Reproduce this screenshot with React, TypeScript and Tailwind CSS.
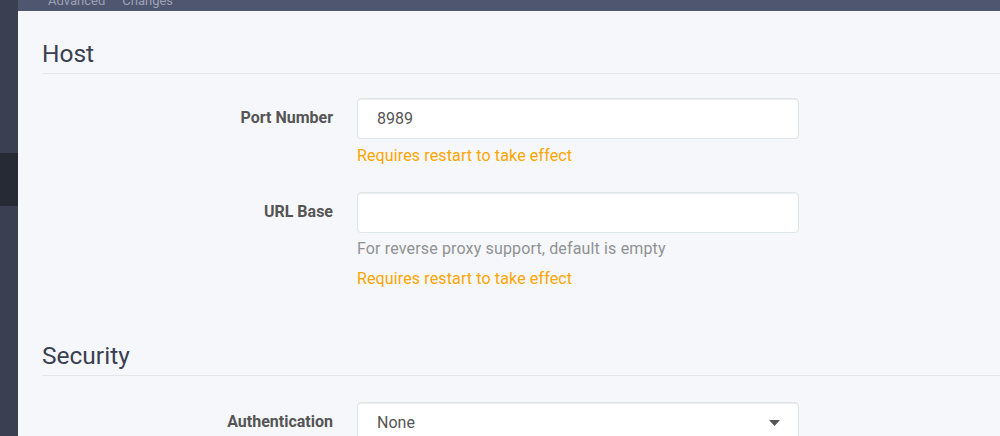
import React from 'react';

const font = { fontFamily: 'Roboto, "Open Sans", "Liberation Sans", sans-serif' };

function Legend({ title }: { title: string }) {
  return (
    <div className="border-b border-[#e5e5e5] pb-[3px] text-[24.5px] leading-[32px] text-[#3a3f51]">
      {title}
    </div>
  );
}

function Row({
  label,
  children,
  help,
  restart,
}: {
  label: string;
  children: React.ReactNode;
  help?: string;
  restart?: boolean;
}) {
  return (
    <div className="flex">
      <div className="w-[291px] shrink-0 pt-[9px] text-right text-[16px] font-bold leading-[22px] text-[#555]">
        {label}
      </div>
      <div className="w-[466px] shrink-0 pl-[24px]">
        {children}
        {help && (
          <div className="mt-[5px] text-[16px] leading-[22px] tracking-[0.15px] text-[#909293]">{help}</div>
        )}
        {restart && (
          <div
            className={
              help
                ? 'mt-[8px] text-[16px] leading-[22px] tracking-[0.13px] text-[#ffa500]'
                : 'mt-[6px] text-[16px] leading-[22px] tracking-[0.13px] text-[#ffa500]'
            }
          >
            Requires restart to take effect
          </div>
        )}
      </div>
    </div>
  );
}

function TextInput({ value }: { value: string }) {
  return (
    <div className="flex h-[41px] items-center rounded-[4px] border border-[#dde6e9] bg-white px-[19px] text-[16px] text-[#555] shadow-[inset_0_1px_1px_rgba(0,0,0,0.075)]">
      {value}
    </div>
  );
}

export default function App() {
  return (
    <div className="flex h-[436px] w-[1000px] overflow-hidden bg-[#f5f7fa]" style={font}>
      {/* sidebar */}
      <div className="flex w-[18px] shrink-0 flex-col bg-[#3a3f51]">
        <div className="h-[153px]" />
        <div className="h-[53px] bg-[#262a35]" />
      </div>

      <div className="flex min-w-0 flex-1 flex-col">
        {/* toolbar, scrolled mostly out of view */}
        <div className="h-[11px] shrink-0 overflow-hidden bg-[#4f566f]">
          <div className="mt-[-6px] flex gap-[17px] pl-[30px] text-[13px] leading-[13px] text-[#9ea3b6]">
            <span>Advanced</span>
            <span>Changes</span>
          </div>
        </div>

        <div className="flex-1 pl-[24px] pt-[27px]">
          <Legend title="Host" />

          <div className="mt-[24px] flex flex-col gap-[25px]">
            <Row label="Port Number" restart>
              <TextInput value="8989" />
            </Row>
            <Row label="URL Base" help="For reverse proxy support, default is empty" restart>
              <TextInput value="" />
            </Row>
          </div>

          <div className="mt-[50px]">
            <Legend title="Security" />
          </div>

          <div className="mt-[26px]">
            <Row label="Authentication">
              <div className="flex h-[41px] items-center justify-between rounded-[4px] border border-[#dde6e9] bg-white pl-[19px] pr-[18px] text-[16px] text-[#555] shadow-[inset_0_1px_1px_rgba(0,0,0,0.075)]">
                <span>None</span>
                <svg width="11" height="6" viewBox="0 0 11 6">
                  <path d="M0 0 L11 0 L5.5 6 Z" fill="#555" />
                </svg>
              </div>
            </Row>
          </div>
        </div>
      </div>
    </div>
  );
}
